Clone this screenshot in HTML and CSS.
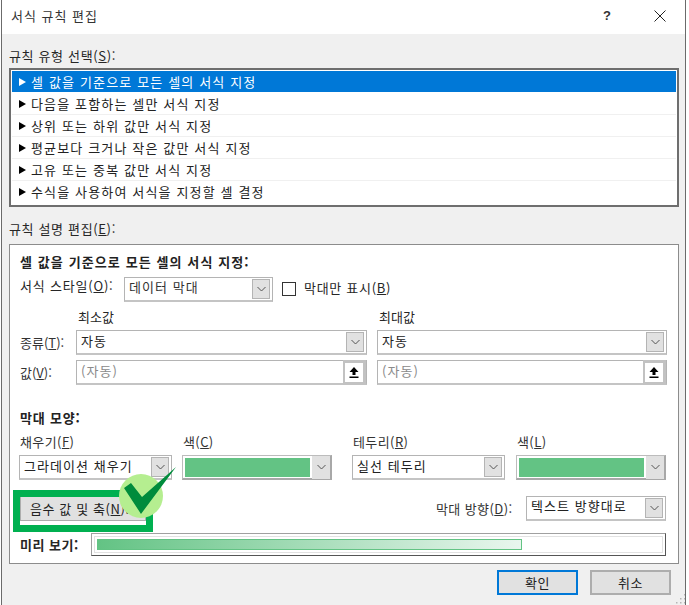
FILE: index.html
```html
<!DOCTYPE html>
<html lang="ko">
<head>
<meta charset="utf-8">
<title>서식 규칙 편집</title>
<link rel="stylesheet" href="styles.css">
</head>
<body>
<div class="dialog">
  <header class="titlebar">
    <span class="title">서식 규칙 편집</span>
    <span class="help">?</span>
    <svg class="close" width="12" height="12" viewBox="0 0 12 12"><path d="M0.500 0.500 11.500 11.500M11.500 0.500 0.500 11.500" stroke="#222" stroke-width="1" fill="none"/></svg>
  </header>
  <main class="body">
    <div class="group-label">규칙 유형 선택(<u>S</u>):</div>
    <ul class="rules">
      <li class="rule selected"><span class="tri"></span>셀 값을 기준으로 모든 셀의 서식 지정</li>
      <li class="rule"><span class="tri"></span>다음을 포함하는 셀만 서식 지정</li>
      <li class="rule"><span class="tri"></span>상위 또는 하위 값만 서식 지정</li>
      <li class="rule"><span class="tri"></span>평균보다 크거나 작은 값만 서식 지정</li>
      <li class="rule"><span class="tri"></span>고유 또는 중복 값만 서식 지정</li>
      <li class="rule"><span class="tri"></span>수식을 사용하여 서식을 지정할 셀 결정</li>
    </ul>
    <div class="group-label second">규칙 설명 편집(<u>E</u>):</div>
    <section class="panel">
      <div class="heading main-heading">셀 값을 기준으로 모든 셀의 서식 지정:</div>
      <div class="row style-row">
        <span class="style-label">서식 스타일(<u>O</u>):</span>
        <div class="select style-select"><span class="val">데이터 막대</span><span class="arrow"><svg width="9" height="6" viewBox="0 0 9 6"><path d="M.5 1 4.500 5 8.500 1" fill="none" stroke="#555"/></svg></span></div>
        <span class="checkbox"></span>
        <span class="only-label">막대만 표시(<u>B</u>)</span>
      </div>
      <div class="row col-heads"><span class="head-min">최소값</span><span class="head-max">최대값</span></div>
      <div class="row minmax">
        <span class="side-label">종류(<u>T</u>):</span>
        <div class="select wide"><span class="val dark">자동</span><span class="arrow"><svg width="9" height="6" viewBox="0 0 9 6"><path d="M.5 1 4.500 5 8.500 1" fill="none" stroke="#555"/></svg></span></div>
        <div class="select wide"><span class="val dark">자동</span><span class="arrow"><svg width="9" height="6" viewBox="0 0 9 6"><path d="M.5 1 4.500 5 8.500 1" fill="none" stroke="#555"/></svg></span></div>
      </div>
      <div class="row minmax value-row">
        <span class="side-label">값(<u>V</u>):</span>
        <div class="select wide"><span class="val muted">(자동)</span><span class="picker"><svg width="10" height="11" viewBox="0 0 10 11"><path d="M5 0 9.500 5H6.500V8H3.500V5H.5ZM.5 9.500H9.500V11H.5Z" fill="#000"/></svg></span></div>
        <div class="select wide"><span class="val muted">(자동)</span><span class="picker"><svg width="10" height="11" viewBox="0 0 10 11"><path d="M5 0 9.500 5H6.500V8H3.500V5H.5ZM.5 9.500H9.500V11H.5Z" fill="#000"/></svg></span></div>
      </div>
      <div class="heading bar-heading">막대 모양:</div>
      <div class="bar-grid">
        <span class="f1">채우기(<u>F</u>)</span>
        <span class="f2">색(<u>C</u>)</span>
        <span class="f3">테두리(<u>R</u>)</span>
        <span class="f4">색(<u>L</u>)</span>
        <div class="select f1"><span class="val dark">그라데이션 채우기</span><span class="arrow"><svg width="9" height="6" viewBox="0 0 9 6"><path d="M.5 1 4.500 5 8.500 1" fill="none" stroke="#555"/></svg></span></div>
        <div class="select f2 color"><span class="swatch"></span><span class="arrow solid"><svg width="9" height="6" viewBox="0 0 9 6"><path d="M.5 1 4.500 5 8.500 1" fill="none" stroke="#555"/></svg></span></div>
        <div class="select f3"><span class="val dark">실선 테두리</span><span class="arrow"><svg width="9" height="6" viewBox="0 0 9 6"><path d="M.5 1 4.500 5 8.500 1" fill="none" stroke="#555"/></svg></span></div>
        <div class="select f4 color"><span class="swatch"></span><span class="arrow solid"><svg width="9" height="6" viewBox="0 0 9 6"><path d="M.5 1 4.500 5 8.500 1" fill="none" stroke="#555"/></svg></span></div>
      </div>
      <div class="row axis-row">
        <button class="btn axis-btn">음수 값 및 축(<u>N</u>)...</button>
        <span class="dir-label">막대 방향(<u>D</u>):</span>
        <div class="select dir-select"><span class="val dark">텍스트 방향대로</span><span class="arrow"><svg width="9" height="6" viewBox="0 0 9 6"><path d="M.5 1 4.500 5 8.500 1" fill="none" stroke="#555"/></svg></span></div>
      </div>
      <div class="row preview-row">
        <span class="preview-label">미리 보기:</span>
        <div class="preview"><div class="bar"></div></div>
      </div>
    </section>
    <footer class="actions">
      <button class="btn action default">확인</button>
      <button class="btn action">취소</button>
    </footer>
  </main>
  <div class="highlight"></div>
  <svg class="badge" width="64" height="70" viewBox="0 0 64 70">
    <circle cx="29" cy="41" r="22" fill="#b5ee90"/>
    <path d="M12 33 19 28 30 42 64 12 29 59Z" fill="#008c3c"/>
  </svg>
  <svg class="grip" width="11" height="11" viewBox="0 0 11 11"><path d="M9 1h1.500v1.500H9ZM5 5h1.500v1.500H5ZM9 5h1.500v1.500H9ZM1 9h1.500v1.500H1ZM5 9h1.500v1.500H5ZM9 9h1.500v1.500H9Z" fill="#b5b5b5"/></svg>
</div>
</body>
</html>
```
FILE: styles.css
```css
* { box-sizing: border-box; }
html, body { margin: 0; padding: 0; background: #fff; }
body {
  font-family: "Noto Sans CJK KR", "Noto Sans", sans-serif;
  font-size: 13px;
  line-height: 16px;
  color: #262626;
}
.dialog {
  position: relative;
  width: 689px;
  height: 605px;
  margin: 0;
  padding: 0 3px 0 2px;
  overflow: hidden;
  background: #fff;
}
.dialog::before, .dialog::after {
  content: "";
  position: absolute;
  top: 0;
  bottom: 0;
  width: 1px;
  background: #6b6b6b;
}
.dialog::before { left: 1px; }
.dialog::after { left: 685px; }
.titlebar {
  display: flex;
  align-items: center;
  height: 34px;
  padding: 0 20px 3px 9px;
  background: #fff;
}
.title { flex: 1; font-size: 13px; letter-spacing: 1px; color: #333; }
.help { font-size: 13px; font-family: "Liberation Sans", sans-serif; margin-right: 43px; font-weight: 700; color: #333; }
.body {
  height: 571px;
  padding: 14px 0 0 7px;
  background: #f0f0f0;
}
.group-label { height: 20px; letter-spacing: .65px; }
.rules {
  list-style: none;
  width: 670px;
  height: 139px;
  margin: 0;
  padding: 1px 1px 0;
  background: #fff;
  border: 2px solid #6e6e6e;
}
.rule {
  display: flex;
  align-items: center;
  height: 22px;
  padding-left: 7px;
  letter-spacing: 1.15px;
  border-bottom: 1px solid #f0f0f0;
  color: #222;
}
.rule:last-child { border-bottom: 0; }
.selected { height: 21px; background: #0078d7; color: #fff; border-bottom: 0; margin-bottom: 1px; }
.tri {
  width: 0;
  height: 0;
  margin-right: 5px;
  border-left: 7px solid #000;
  border-top: 4px solid transparent;
  border-bottom: 4px solid transparent;
}
.selected .tri { border-left-color: #fff; }
.group-label.second { margin-top: 14px; height: 23px; }
.panel {
  width: 670px;
  height: 320px;
  padding: 9px 0 0 10px;
  background: #fff;
  border: 1px solid #8c8c8c;
}
.heading { font-weight: 700; height: 16px; letter-spacing: .8px; color: #222; }
.main-heading { letter-spacing: 1.1px; }
.row { display: flex; align-items: center; }
.style-row { height: 24px; margin-top: 7px; }
.style-label { width: 104px; letter-spacing: .8px; position: relative; top: -3px; white-space: nowrap; }
.select {
  display: flex;
  align-items: center;
  justify-content: space-between;
  height: 25px;
  padding: 1px 2px;
  background: #fff;
  border: 1px solid #b4b4b4;
  border-bottom: 2px solid #c4c4c4;
}
.val { padding: 0 0 3px 2px; letter-spacing: 1.05px; white-space: nowrap; color: #333; }
.val.dark { color: #222; }
.val.muted { color: #8a8a8a; }
.arrow {
  display: flex;
  align-items: center;
  justify-content: center;
  flex: none;
  width: 18px;
  height: 20px;
  background: #e1e1e1;
  border: 1px solid #b4b4b4;
}
.arrow.solid { height: 23px; margin-right: -2px; border: 0; background: #e1e1e1; }
.style-select { width: 149px; }
.checkbox {
  width: 14px;
  height: 14px;
  margin: -1px 8px 0 9px;
  background: #fff;
  border: 1px solid #333;
}
.only-label { position: relative; top: -1px; letter-spacing: .7px; }
.col-heads { height: 17px; margin-top: 8px; }
.head-min { margin-left: 58px; width: 301px; }
.col-heads span { position: relative; top: -1px; }
.minmax { height: 25px; margin-top: 4px; }
.value-row { margin-top: 5px; }
.side-label { width: 56px; letter-spacing: 0; color: #333; }
.wide { width: 291px; margin-right: 10px; }
.wide + .wide { width: 290px; margin-right: 0; }
.picker {
  display: flex;
  align-items: center;
  justify-content: center;
  flex: none;
  width: 23px;
  height: 25px;
  margin: -1px -2px -2px 0;
  background: #fff;
  border: solid #c2c2c2;
  border-width: 3px 3px 3px 2px;
}
.bar-heading { margin-top: 25px; }
.bar-grid {
  display: grid;
  grid-template-columns: 153px 150px 163px 151px;
  column-gap: 10px;
  grid-template-rows: 16px 25px;
  row-gap: 5px;
  margin: 8px 0 0 -1px;
}
.bar-grid > span { letter-spacing: .4px; padding-left: 1px; color: #333; }
.f1 { grid-column: 1; }
.f2 { grid-column: 2; }
.f3 { grid-column: 3; margin-left: 10px; }
.f4 { grid-column: 4; margin-left: 1px; }
.color { padding: 2px; border: 1px solid #bcbcbc; border-right: 2px solid #a8a8a8; border-bottom: 2px solid #a8a8a8; }
.swatch { flex: 1; height: 19px; margin-right: 2px; background: #63c384; }
.axis-row { height: 25px; margin-top: 16px; }
.btn {
  font: inherit;
  color: #222;
  background: #e1e1e1;
  border: 1px solid #adadad;
  padding: 0;
  letter-spacing: .6px;
}
.axis-btn { flex: none; width: 126px; height: 25px; margin-right: 290px; white-space: nowrap; text-align: left; padding-left: 9px; }
.dir-label { width: 90px; letter-spacing: .4px; color: #333; white-space: nowrap; }
.dir-select { width: 140px; margin-top: -1px; }
.preview-row { height: 23px; margin-top: 12px; }
.preview-label { width: 71px; font-weight: 700; letter-spacing: .5px; white-space: nowrap; }
.preview {
  width: 575px;
  height: 23px;
  padding: 5px;
  background: #fff;
  border: 1px solid #a0a0a0;
  border-right-color: #555;
  border-bottom-color: #555;
  box-shadow: inset 0 0 0 2px #fff, inset 0 0 0 3px #e2e2e2;
}
.bar {
  width: 425px;
  height: 11px;
  background: linear-gradient(90deg, #63c384, #e9f6ee);
  border: 1px solid #63c384;
}
.actions { display: flex; gap: 12px; margin: 6px 0 0 488px; }
.action { width: 81px; height: 25px; border: 2px solid #adadad; }
.action.default { border: 2px solid #0078d7; }
.highlight {
  position: absolute;
  left: 13px;
  top: 490px;
  width: 140px;
  height: 42px;
  border: 7px solid #00b050;
}
.badge { position: absolute; left: 112px; top: 455px; }
.grip { position: absolute; left: 675px; top: 593px; }
```
